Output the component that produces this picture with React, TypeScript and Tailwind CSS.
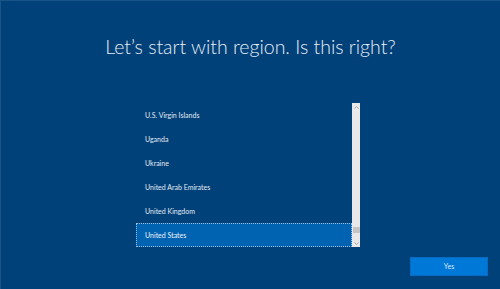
import React from "react";

const REGIONS = [
  "U.S. Virgin Islands",
  "Uganda",
  "Ukraine",
  "United Arab Emirates",
  "United Kingdom",
  "United States",
];

function Scrollbar() {
  return (
    <div className="flex w-[8px] flex-col bg-[#e8e8e8]">
      <div className="flex h-[8px] items-center justify-center">
        <svg width="5" height="3" viewBox="0 0 5 3" fill="none" stroke="#9a9a9a" strokeWidth="0.8">
          <path d="M0.5 2.5 L2.5 0.5 L4.5 2.5" />
        </svg>
      </div>
      <div className="flex-1" />
      <div className="mx-[0.5px] h-[6px] bg-[#c4c4c4]" />
      <div className="h-[6px]" />
      <div className="flex h-[8px] items-center justify-center">
        <svg width="5" height="3" viewBox="0 0 5 3" fill="none" stroke="#9a9a9a" strokeWidth="0.8">
          <path d="M0.5 0.5 L2.5 2.5 L4.5 0.5" />
        </svg>
      </div>
    </div>
  );
}

export default function App() {
  return (
    <div
      className="flex h-[289px] w-[500px] flex-col border-t border-l border-[#1b5489] bg-[#00417a] text-white"
      style={{ fontFamily: 'Lato, "Noto Sans", sans-serif' }}
    >
      <h1 className="mt-[31px] text-center text-[19.5px] font-light leading-[30px] text-[#e8eef5]">
        Let’s start with region. Is this right?
      </h1>

      <div className="ml-[135px] mt-[41px] flex h-[144px] w-[224px]">
        <ul className="flex flex-1 flex-col">
          {REGIONS.map((r) => {
            const selected = r === "United States";
            return (
              <li
                key={r}
                className={
                  selected
                    ? "flex h-[24px] items-center border border-dotted border-[#9fbfe0] bg-[#0063b1] pl-[8px] text-[7px] text-[#eef3f8]"
                    : "flex h-[24px] items-center pl-[9px] text-[7px] text-[#e2eaf2]"
                }
              >
                {r}
              </li>
            );
          })}
        </ul>
        <Scrollbar />
      </div>

      <div className="mr-[12px] mt-[10px] flex justify-end">
        <button className="h-[19px] w-[78px] border border-[#0a6ac0] bg-[#0078d7] text-[7px] text-[#dceaf8]">
          Yes
        </button>
      </div>
    </div>
  );
}
